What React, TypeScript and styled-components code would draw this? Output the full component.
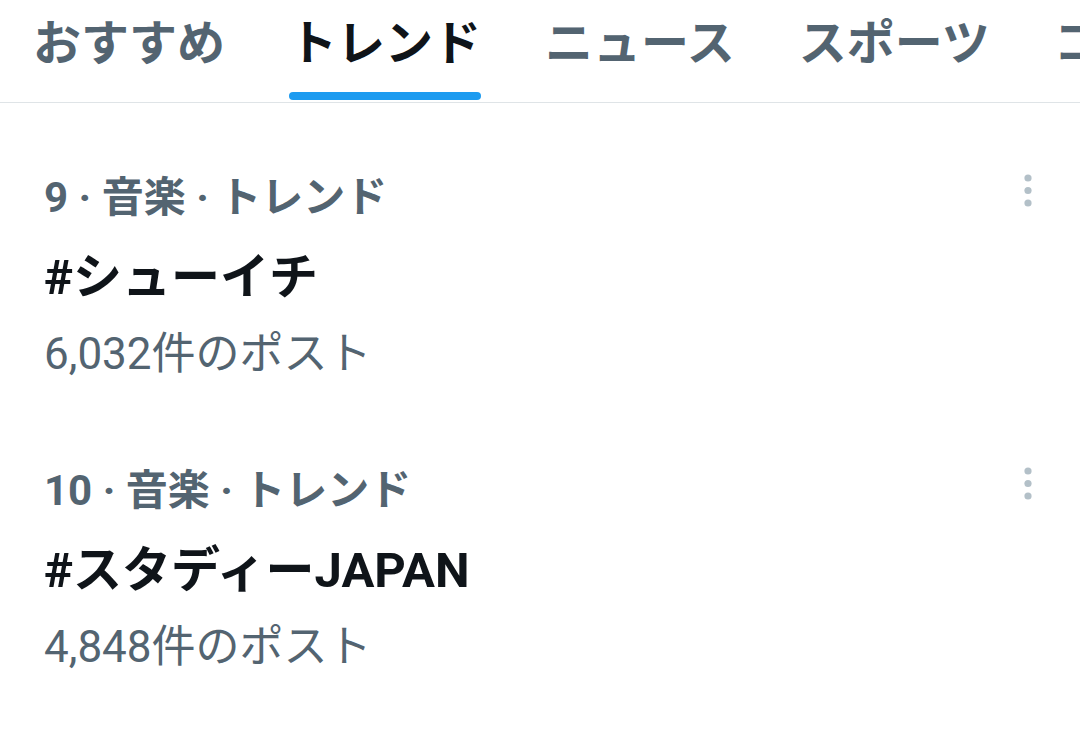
import React from "react";
import styled, { createGlobalStyle } from "styled-components";

const GlobalStyle = createGlobalStyle`
  html, body {
    margin: 0;
    padding: 0;
    background: #ffffff;
  }
  body {
    width: 1080px;
    height: 733px;
    overflow: hidden;
    font-family: Roboto, "Noto Sans CJK JP", sans-serif;
    -webkit-font-smoothing: antialiased;
  }
`;

const Page = styled.div`
  width: 1080px;
  height: 733px;
  background: #ffffff;
  overflow: hidden;
`;

const TabBar = styled.nav`
  display: flex;
  gap: 64px;
  height: 102px;
  padding-left: 33px;
  border-bottom: 1px solid #dfe4e7;
  overflow: hidden;
  white-space: nowrap;
`;

const Tab = styled.div<{ $active?: boolean }>`
  display: flex;
  flex-direction: column;
  align-items: stretch;
  flex-shrink: 0;
  font-size: 48px;
  line-height: 88px;
  font-weight: 700;
  color: ${(p) => (p.$active ? "#0f1419" : "#536471")};
`;

const Indicator = styled.div<{ $visible?: boolean }>`
  height: 8px;
  margin-top: 4px;
  border-radius: 4px;
  background: ${(p) => (p.$visible ? "#1d9bf0" : "transparent")};
`;

const List = styled.section`
  display: flex;
  flex-direction: column;
`;

const Row = styled.article`
  display: flex;
  align-items: flex-start;
  justify-content: space-between;
  padding: 67px 47px 14px 44px;
`;

const Body = styled.div`
  display: flex;
  flex-direction: column;
`;

const Meta = styled.div`
  font-size: 42px;
  line-height: 56px;
  font-weight: 700;
  color: #536471;
`;

const Title = styled.div`
  margin-top: 24px;
  font-size: 49px;
  line-height: 56px;
  font-weight: 700;
  color: #0f1419;
`;

const Count = styled.div`
  margin-top: 20px;
  font-size: 44px;
  line-height: 56px;
  font-weight: 400;
  color: #536471;
`;

const More = styled.button`
  display: flex;
  border: 0;
  padding: 0;
  margin: 4px 0 0 0;
  background: transparent;
`;

const MoreIcon = () => (
  <svg width="10" height="34" viewBox="0 0 10 34">
    <circle cx="5" cy="4" r="3.6" fill="#b3c0c8" />
    <circle cx="5" cy="16.5" r="3.6" fill="#b3c0c8" />
    <circle cx="5" cy="29" r="3.6" fill="#b3c0c8" />
  </svg>
);

const tabs = ["おすすめ", "トレンド", "ニュース", "スポーツ", "コロナウイルス"];

const trends = [
  { rank: 9, category: "音楽", title: "#シューイチ", count: "6,032" },
  { rank: 10, category: "音楽", title: "#スタディーJAPAN", count: "4,848" },
];

export default function App() {
  return (
    <Page>
      <GlobalStyle />
      <TabBar>
        {tabs.map((t, i) => (
          <Tab key={t} $active={i === 1}>
            <span>{t}</span>
            <Indicator $visible={i === 1} />
          </Tab>
        ))}
      </TabBar>
      <List>
        {trends.map((tr) => (
          <Row key={tr.rank}>
            <Body>
              <Meta>
                {tr.rank} · {tr.category} · トレンド
              </Meta>
              <Title>{tr.title}</Title>
              <Count>{tr.count}件のポスト</Count>
            </Body>
            <More aria-label="その他">
              <MoreIcon />
            </More>
          </Row>
        ))}
      </List>
    </Page>
  );
}
